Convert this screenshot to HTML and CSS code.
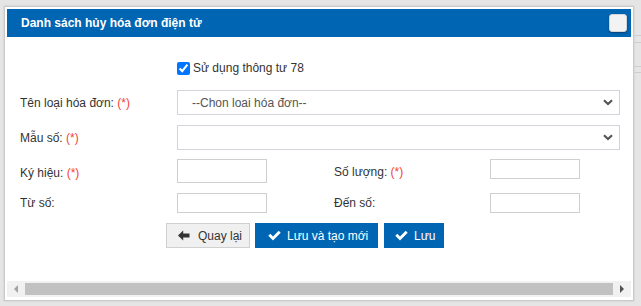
FILE: index.html
```html
<!DOCTYPE html>
<html lang="vi">
<head>
<meta charset="utf-8">
<title>Danh sách hủy hóa đơn điện tử</title>
<link rel="stylesheet" href="styles.css">
</head>
<body>
<div class="backdrop">
  <div class="bk-line l1"></div>
  <div class="bk-line l2"></div>
  <div class="bk-line l3"></div>
  <div class="bk-line l4"></div>
</div>
<div class="dialog">
  <div class="titlebar">
    <span class="title">Danh sách hủy hóa đơn điện tử</span>
    <span class="close"></span>
  </div>
  <div class="form">
    <div class="check-row">
      <input type="checkbox" class="chk" checked>
      <span class="chk-label">Sử dụng thông tư 78</span>
    </div>
    <div class="row row-select">
      <label class="lbl">Tên loại hóa đơn: <span class="req">(*)</span></label>
      <div class="select">
        <span class="sel-text">--Chon loai hóa đơn--</span>
        <svg class="chev" width="10" height="7" viewBox="0 0 10 7"><path d="M1 1.2 L5 5 L9 1.2" fill="none" stroke="#555" stroke-width="2.2"/></svg>
      </div>
    </div>
    <div class="row row-select second">
      <label class="lbl">Mẫu số: <span class="req">(*)</span></label>
      <div class="select">
        <span class="sel-text"></span>
        <svg class="chev" width="10" height="7" viewBox="0 0 10 7"><path d="M1 1.2 L5 5 L9 1.2" fill="none" stroke="#555" stroke-width="2.2"/></svg>
      </div>
    </div>
    <div class="row row-pair first-pair">
      <label class="lbl">Ký hiệu: <span class="req">(*)</span></label>
      <div class="inp tall"></div>
      <label class="lbl lbl-right">Số lượng: <span class="req">(*)</span></label>
      <div class="inp"></div>
    </div>
    <div class="row row-pair second-pair">
      <label class="lbl">Từ số:</label>
      <div class="inp"></div>
      <label class="lbl lbl-right">Đến số:</label>
      <div class="inp"></div>
    </div>
    <div class="buttons">
      <button class="btn btn-back">
        <svg width="12" height="11" viewBox="0 0 12 11"><path d="M0 5.5 L5.2 0.5 L5.2 3.6 L11.5 3.6 L11.5 7.4 L5.2 7.4 L5.2 10.5 Z" fill="#333"/></svg>
        <span>Quay lại</span>
      </button>
      <button class="btn btn-primary btn-new">
        <svg width="13" height="11" viewBox="0 0 13 11"><path d="M0.3 5.8 L2.3 3.8 L5 6.5 L10.7 0.8 L12.7 2.8 L5 10.5 Z" fill="#fff"/></svg>
        <span>Lưu và tạo mới</span>
      </button>
      <button class="btn btn-primary btn-save">
        <svg width="13" height="11" viewBox="0 0 13 11"><path d="M0.3 5.8 L2.3 3.8 L5 6.5 L10.7 0.8 L12.7 2.8 L5 10.5 Z" fill="#fff"/></svg>
        <span>Lưu</span>
      </button>
    </div>
  </div>
  <div class="hscroll">
    <div class="arrow-box"><span class="tri tri-left"></span></div>
    <div class="thumb"></div>
    <div class="arrow-box"><span class="tri tri-right"></span></div>
  </div>
</div>
</body>
</html>
```
FILE: styles.css
```css
* { box-sizing: border-box; }
html, body { margin: 0; padding: 0; }
body {
  background: #e5e5e5;
  font-family: "Liberation Sans", Arial, sans-serif;
  font-size: 12px;
  color: #333;
  width: 641px;
  height: 306px;
  overflow: hidden;
  padding: 6px 0 0 4px;
  position: relative;
}
.backdrop {
  position: absolute;
  left: 634px;
  top: 0;
  width: 7px;
  height: 306px;
}
.bk-line {
  position: absolute;
  left: 1px;
  right: 0;
  height: 1px;
  background: #cdcdcd;
}
.l1 { top: 35px; }
.l2 { top: 42px; }
.l3 { top: 66px; }
.l4 { top: 72px; }

.dialog {
  position: relative;
  width: 630px;
  height: 295px;
  background: #fff;
  border: 1px solid #cacaca;
  box-shadow: 0 0 2px rgba(0,0,0,0.15);
  padding: 2px;
  display: flex;
  flex-direction: column;
}
.titlebar {
  height: 28px;
  background: #0065b3;
  display: flex;
  align-items: center;
  justify-content: space-between;
  padding: 0 4px 0 14px;
  flex: none;
}
.title {
  color: #fff;
  font-weight: bold;
  font-size: 12px;
  letter-spacing: 0;
}
.close {
  width: 18px;
  height: 18px;
  background: #f3f3f3;
  border: 1px solid #d5d5d5;
  border-radius: 3px;
  box-shadow: 0 1px 2px rgba(0,0,0,0.35);
}
.form {
  height: 244px;
  padding: 24px 0 0 13px;
  flex: none;
}
.check-row {
  display: flex;
  align-items: center;
  height: 14px;
  padding-left: 157px;
}
.chk {
  width: 13px;
  height: 13px;
  margin: 0 3px 0 0;
  accent-color: #0075ff;
}
.chk-label { color: #333; }
.row {
  display: flex;
  align-items: center;
}
.lbl {
  width: 157px;
  flex: none;
  color: #333;
}
.req { color: #f44336; }
.row-select { margin-top: 15px; height: 25px; }
.row-select.second { margin-top: 10px; }
.select {
  width: 443px;
  height: 25px;
  border: 1px solid #d3d3dc;
  display: flex;
  align-items: center;
  justify-content: space-between;
  padding: 0 6px 0 14px;
  color: #555;
}
.chev { display: block; }
.row-pair { align-items: flex-start; }
.first-pair { margin-top: 9px; height: 24px; }
.second-pair { margin-top: 10px; height: 20px; }
.row-pair .lbl { line-height: 20px; }
.first-pair .lbl { padding-top: 4px; }
.first-pair .lbl-right { padding-top: 3px; }
.lbl-right { width: 156px; margin-left: 67px; }
.second-pair .lbl { padding-top: 0; }
.inp {
  width: 90px;
  height: 20px;
  border: 1px solid #cfcfcf;
  flex: none;
}
.inp.tall { height: 24px; }
.buttons {
  margin-top: 10px;
  margin-left: 146px;
  display: flex;
  gap: 5px;
}
.btn {
  height: 25px;
  border: 1px solid #d0d0d0;
  font-family: inherit;
  font-size: 12px;
  display: flex;
  align-items: center;
  gap: 6px;
  cursor: pointer;
  border-radius: 0;
}
.btn-back {
  width: 84px;
  background: #f0f0f0;
  color: #333;
  padding: 0 0 0 11px;
  gap: 8px;
}
.btn-primary {
  background: #0065b3;
  border-color: #0065b3;
  color: #fff;
}
.btn-new { width: 123px; padding-left: 12px; }
.btn-save { width: 60px; padding-left: 10px; margin-left: 1px; }
.hscroll {
  height: 16px;
  background: #f1f1f1;
  display: flex;
  align-items: center;
  flex: none;
}
.arrow-box {
  width: 18px;
  height: 16px;
  display: flex;
  align-items: center;
  justify-content: center;
  flex: none;
}
.thumb {
  flex: 1;
  height: 12px;
  background: #c1c1c1;
}
.tri {
  width: 0;
  height: 0;
  border-top: 4px solid transparent;
  border-bottom: 4px solid transparent;
}
.tri-left { border-right: 4px solid #a3a3a3; }
.tri-right { border-left: 4px solid #505050; }
```
